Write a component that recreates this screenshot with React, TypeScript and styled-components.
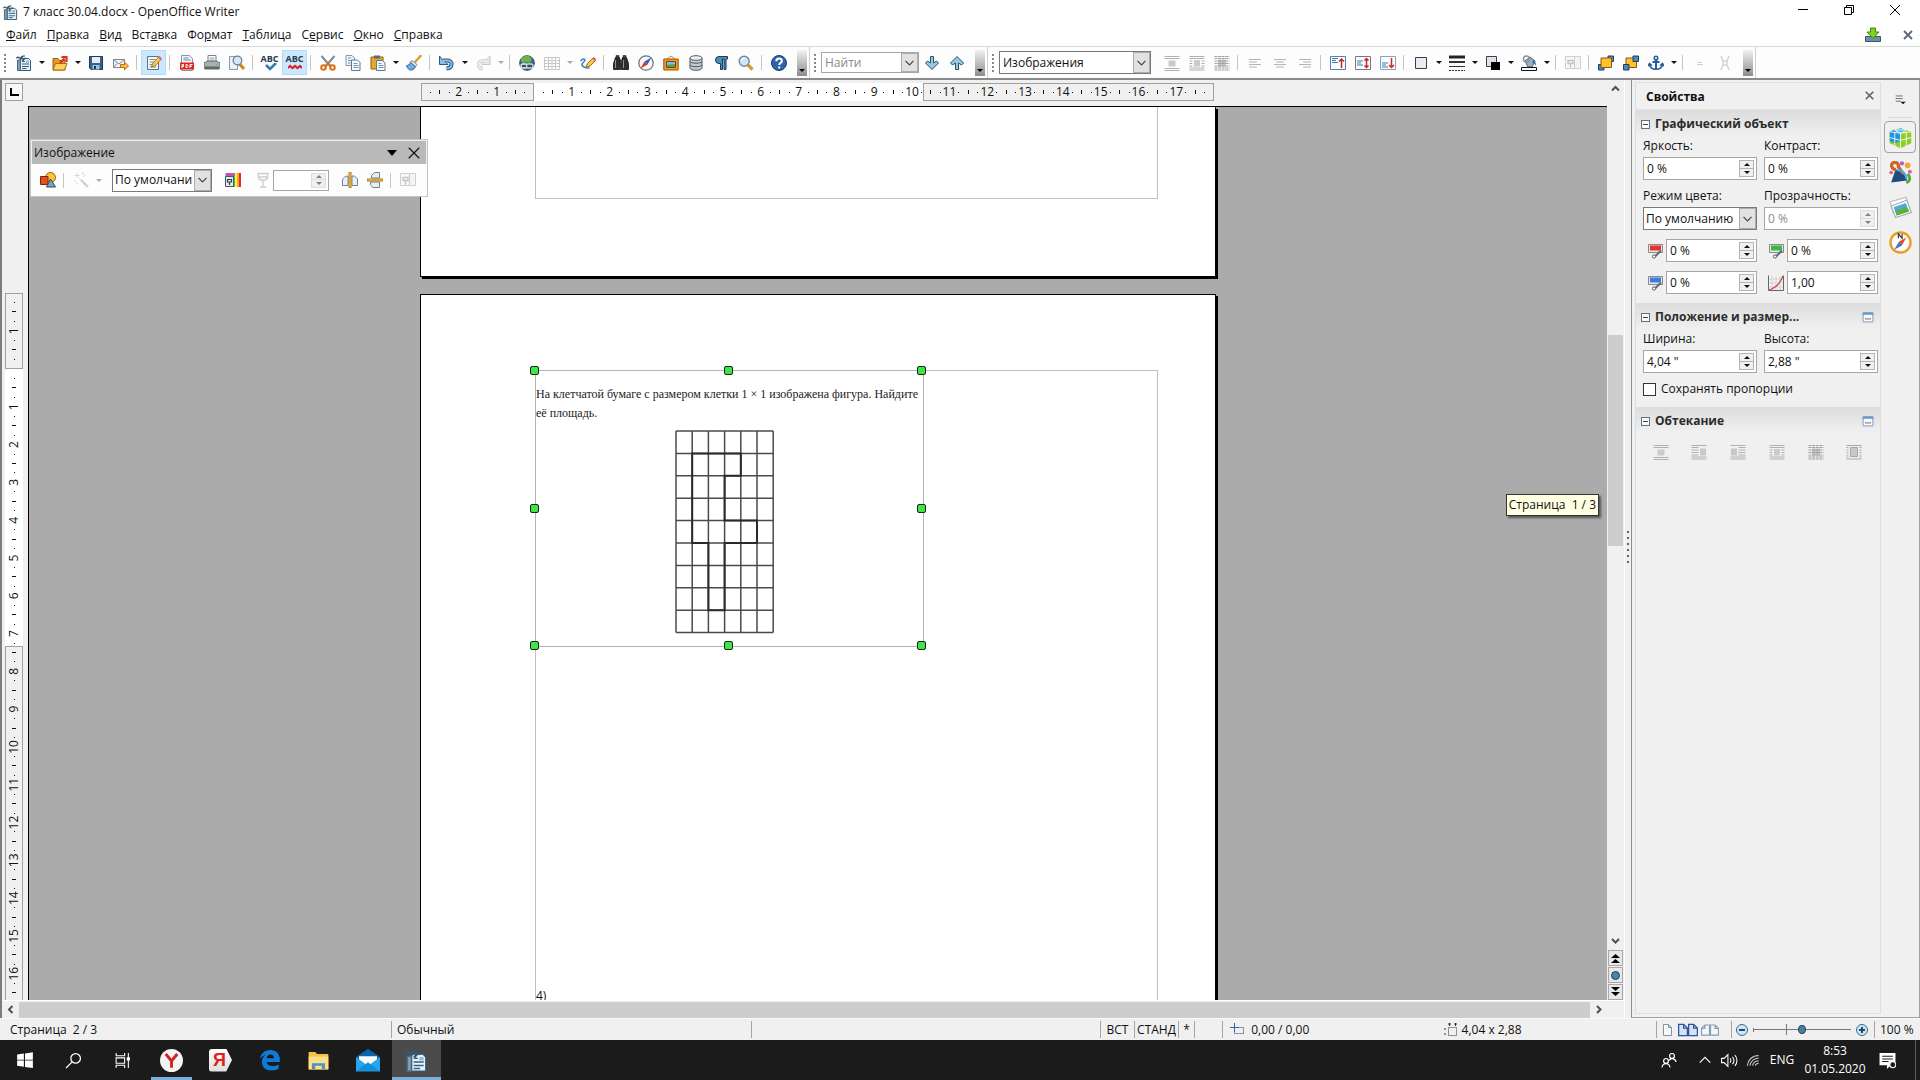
import React from "react";
import styled, { createGlobalStyle, css } from "styled-components";

const uiFont = `"Open Sans", "Noto Sans", sans-serif`;

const GlobalStyle = createGlobalStyle`
  * { box-sizing: border-box; }
  body { margin: 0; font: 12px/16px ${uiFont}; color: #111; background: #f0f0f0; overflow: hidden; }
  button, input, select { font: inherit; color: inherit; border: 0; padding: 0; margin: 0; background: none; border-radius: 0; }
  svg { display: block; flex: none; }
`;

/* ---------- icons ---------- */

const icons: Record<string, React.ReactNode> = {
  writer: (
    <>
      <path d="M4.500 3.500h8l2 2v10h-10z" fill="#e8f1f8" stroke="#36566e" />
      <path d="M6 6.500h3M6 9h7M6 11.500h7M6 13.500h4.500" stroke="#2d6487" />
      <path d="M10 5.500h3v2.500h-3z" fill="#9db9cb" />
      <path d="M0 3.200C1.500 1.200 3 1.500 4 3c1-2 3-2.800 5-2-1.800.2-3 1.500-3.800 3.500C4 3.200 2 2.500 0 3.200zM6 5.500c1.500-2.500 3-3 5-2-2 0-3 1-4 3-.3-.5-.6-.8-1-1z" fill="#36566e" stroke="#36566e" strokeWidth=".5" />
      <path d="M1.500 5v10.500h3V5z" fill="#7f9cb0" stroke="#4b697e" />
    </>
  ),
  open: (
    <>
      <path d="M1 3.500h5l1.500 2H13V15H1z" fill="#e39a1d" stroke="#9b6314" />
      <path d="M3.500 8.500H15L12.500 15H1z" fill="#ffd05c" stroke="#a86c12" />
      <path d="M8 8l4.500-4.500M9.500 2h5v5" fill="none" stroke="#d7331f" strokeWidth="2.200" />
    </>
  ),
  save: (
    <>
      <path d="M1.500 1.500h13v13H3l-1.500-1.500z" fill="#3b6288" stroke="#1f3a55" />
      <path d="M4 2h8v6H4z" fill="#e5eef5" />
      <path d="M4.500 10h7v4.500h-7z" fill="#9cc3dd" />
      <path d="M6 11h2v3H6z" fill="#1f3a55" />
    </>
  ),
  mail: (
    <>
      <path d="M.5 4.500h11v8H.5z" fill="#f3f3f3" stroke="#808890" />
      <path d="M.5 4.500L6 9l5.500-4.500M.5 12.500L4 8.500" fill="none" stroke="#808890" />
      <path d="M7.500 9.500h4V7l4 4-4 4v-2.500h-4z" fill="#ffb84a" stroke="#c06c0e" />
    </>
  ),
  edit: (
    <>
      <path d="M1.500 1.500h11v13h-11z" fill="#f4f7fa" stroke="#5d7184" />
      <path d="M3.500 4.500h6M3.500 7h5M3.500 9.500h3M3.500 12h7" stroke="#7e93a6" />
      <path d="M5.500 12l1-3.500 6-6.500L15 4.500 9 11z" fill="#ffc83f" stroke="#8a6418" strokeWidth=".8" />
      <path d="M12 2.500L13.500 1 16 3.500 14.500 5z" fill="#e35b86" />
    </>
  ),
  pdf: (
    <>
      <path d="M2.500.5h8l3 3v12h-11z" fill="#f0f3f6" stroke="#8796a5" />
      <path d="M4.500 3h5M4.500 5h7" stroke="#6e8aa5" />
      <path d="M1 7.500h14v7H1z" fill="#d7281c" />
      <path d="M3 13V9.500h1.500v2H3M7 9.500v3h1.200l.8-1v-1l-.8-1zM11 13V9.500h2.500M11 11.200h2" fill="none" stroke="#fff" />
    </>
  ),
  print: (
    <>
      <path d="M4 .5h8V7H4z" fill="#fff" stroke="#75828e" />
      <path d="M5.500 3h5M5.500 5h5" stroke="#8fa0b0" />
      <path d="M1.500 7.500L3 6h10l1.500 1.500H16v6H0v-6z" fill="#a9b0ad" stroke="#4f5856" strokeWidth=".8" />
      <path d="M1 11.500h14v3H1z" fill="#5f6965" />
      <path d="M12 9.500h2" stroke="#67c04b" />
    </>
  ),
  preview: (
    <>
      <path d="M.5 1.500h8v13h-8z" fill="#eef2f6" stroke="#8c9baa" />
      <path d="M10.500 9l4.500 5" stroke="#c58a1a" strokeWidth="3" />
      <circle cx="8.500" cy="5.500" r="4.300" fill="#d4e8f8" stroke="#667f96" strokeWidth="1.300" />
    </>
  ),
  cut: (
    <>
      <path d="M1.500 1L11 12M14.500 1L5 12" stroke="#7d8a94" strokeWidth="2" />
      <circle cx="3.500" cy="12.500" r="2.300" fill="none" stroke="#d9701b" strokeWidth="2" />
      <circle cx="12.500" cy="12.500" r="2.300" fill="none" stroke="#d9701b" strokeWidth="2" />
      <path d="M5.500 11L8 8l2.500 3" fill="none" stroke="#d9701b" strokeWidth="1.800" />
    </>
  ),
  copy: (
    <>
      <path d="M1 .5h6l2.500 2.500v7.500H1z" fill="#eef3f8" stroke="#8597a8" />
      <path d="M6.500 5h6L15 7.500v8H6.500z" fill="#f7fafc" stroke="#5f7890" />
      <path d="M3 3h3M3 5.500h3M3 8h2.500M8.500 8.500h4M8.500 10.500h5M8.500 12.500h5" stroke="#6d95b5" />
    </>
  ),
  paste: (
    <>
      <path d="M1 2h12v12H1z" fill="#e8a92b" stroke="#8d6012" />
      <path d="M4 .5h6v3H4z" fill="#5e6872" />
      <path d="M6.500 5.500h6L15 8v7.500H6.500z" fill="#f3f7fa" stroke="#5f7890" />
      <path d="M8.500 8.500h3M8.500 10.500h5M8.500 12.500h5" stroke="#6d95b5" />
    </>
  ),
  brush: (
    <>
      <path d="M9.500 6.500L14.500 1" stroke="#d7a32c" strokeWidth="2.600" strokeLinecap="round" />
      <path d="M6 5.500l5 4-1.500 2-5.500-4.500z" fill="#e6edf2" stroke="#53738c" strokeWidth=".8" />
      <path d="M4.500 7.500l5 4.200C8.500 14.500 6 15.500 3.500 15c-1-1-2.500-2-3-4.500C2.500 10.500 3.500 9 4.500 7.500z" fill="#5ea0d6" stroke="#2e669a" strokeWidth=".8" />
      <path d="M3 11l2 2.500M5 9.500l2.500 3" stroke="#c4e1f5" strokeWidth=".8" />
    </>
  ),
  undo: (
    <>
      <path d="M4 5.500h5a3.500 3.500 0 013.500 4c-.2 2.500-2 3.800-5 4" fill="none" stroke="#295a84" strokeWidth="4" />
      <path d="M.5 1v8.500H9L6 6.500 3 4z" fill="#8dbde0" stroke="#295a84" />
      <path d="M4 5.500h5a3.500 3.500 0 013.500 4c-.2 2.500-2 3.800-5 4" fill="none" stroke="#8dbde0" strokeWidth="2" />
    </>
  ),
  redo: (
    <>
      <path d="M11 6H7a3.500 3.500 0 00-3.500 4c.2 2.500 2 3.500 4.500 3.500" fill="none" stroke="#cfcfcf" strokeWidth="3.400" />
      <path d="M15 1v8.500H7L10 6l2-2z" fill="#e8e8e8" stroke="#c8c8c8" />
      <path d="M11 6H7a3.500 3.500 0 00-3.500 4c.2 2.500 2 3.500 4.500 3.500" fill="none" stroke="#f0f0f0" strokeWidth="1.600" />
    </>
  ),
  globe: (
    <>
      <circle cx="8" cy="8" r="7.300" fill="#356c96" stroke="#2b4c5f" />
      <path d="M2 4c2-3 5-3.500 8-3l3 3-2 4-4-1-3 1-2-2z" fill="#6fb348" />
      <rect x="2" y="9" width="6.500" height="4" rx="2" fill="#35505f" stroke="#e8eef0" strokeWidth="1.300" />
      <rect x="7.500" y="9" width="6.500" height="4" rx="2" fill="#35505f" stroke="#c8d4d8" strokeWidth="1.300" />
    </>
  ),
  table: <path d="M.5 2.500h15v12H.5zM.5 5.500h15M.5 8.500h15M.5 11.500h15M4.500 2.500v12M8 2.500v12M11.500 2.500v12" fill="none" stroke="#c9c9c9" />,
  draw: (
    <>
      <path d="M.5 6c3-3 5-2 4 0s-4 3-2 5 5 2 7 2" fill="none" stroke="#3d79b8" strokeWidth="1.500" />
      <path d="M6 12.500l1.500-4L13 3l2.500 2.500L10 11z" fill="#ffc544" stroke="#8b5a14" strokeWidth=".9" />
      <path d="M12.300 3.500L14 2l2 2-1.500 2z" fill="#e25a5a" />
    </>
  ),
  find: (
    <>
      <path d="M2.500 2.500h4l1 5v7h-7v-6zM9.500 2.500h4l2 6v6h-7v-7z" fill="#2c2f31" stroke="#111" strokeWidth=".8" />
      <path d="M3 .5h3v2.500H3zM10 .5h3v2.500h-3zM6.500 5h3v4h-3z" fill="#3f4448" stroke="#111" strokeWidth=".5" />
      <path d="M2.500 5v8M10.500 5v8" stroke="#8d959b" />
    </>
  ),
  compass: (
    <>
      <circle cx="8" cy="8" r="7.200" fill="#f8f8f8" stroke="#6f777e" strokeWidth="1.300" />
      <path d="M13.500 2.500L9.500 9.500l-3-3z" fill="#2a63c4" />
      <path d="M2.500 13.500l4-7 3 3z" fill="#dd2f23" />
    </>
  ),
  gallery: (
    <>
      <path d="M4 4l4-3 4 3" fill="none" stroke="#b08d46" />
      <path d="M.8 4h14.400v11H.8z" fill="#f09c28" stroke="#9a5208" />
      <path d="M3.500 6.500h9v6h-9z" fill="#7cbcf0" stroke="#7d4509" />
      <path d="M4 12v-1.500c3-2 5 0 8-1.500v3z" fill="#52a043" />
    </>
  ),
  database: (
    <>
      <path d="M2 3v10c0 3 12 3 12 0V3z" fill="#c8cccf" stroke="#50585e" />
      <ellipse cx="8" cy="3" rx="6" ry="2.300" fill="#f3f5f6" stroke="#50585e" />
      <path d="M2 6.500c1 2.300 11 2.300 12 0M2 10c1 2.300 11 2.300 12 0" fill="none" stroke="#50585e" />
    </>
  ),
  pilcrow: <path d="M14.500 1.500H6a3.500 3.500 0 000 7h1.500V14.500h2V4h1.500v10.500h2V4h1.500z" fill="#4d8db8" stroke="#173e5f" />,
  zoom: (
    <>
      <path d="M10 10l4.500 4.500" stroke="#d39a28" strokeWidth="3.200" />
      <circle cx="6.200" cy="6.200" r="5" fill="#cfe5f6" stroke="#71879a" strokeWidth="1.400" />
      <path d="M3.500 6a3 3 0 013-2.800" fill="none" stroke="#fff" strokeWidth="1.200" />
    </>
  ),
  help: (
    <>
      <circle cx="8" cy="8" r="7.500" fill="#2f64ad" stroke="#173b74" />
      <path d="M5.300 6.200c0-3.600 5.600-3.400 5.600-.3 0 2-2.700 2-2.700 4.100M8.200 11.500v2" fill="none" stroke="#fff" strokeWidth="2" />
    </>
  ),
  down: <path d="M6.500 1.500h3V8l3-2 2 2L8 14.500 1.500 8l2-2 3 2z" fill="#9fc6df" stroke="#1f5273" />,
  up: <path d="M6.500 14.500h3V8l3 2 2-2L8 1.500 1.500 8l2 2 3-2z" fill="#9fc6df" stroke="#1f5273" />,
  wrapOff: (
    <>
      <path d="M.5 1.500h15M.5 3.500h15M.5 13.500h15M.5 15.500h15" stroke="#b0b0b0" />
      <path d="M4.500 5.500h7v6h-7z" fill="#cbcbcb" />
    </>
  ),
  wrapLeft: (
    <>
      <path d="M.5 1.500h15M.5 3.500h7M.5 6h7M.5 8.500h7M.5 11h7M.5 13h15M.5 15h15" stroke="#b0b0b0" />
      <path d="M9 4.500h6v7H9z" fill="#c8c8c8" />
    </>
  ),
  wrapRight: (
    <>
      <path d="M.5 1.500h15M8.500 3.500h7M8.500 6h7M8.500 8.500h7M8.500 11h7M.5 13h15M.5 15h15" stroke="#b0b0b0" />
      <path d="M1 4.500h6v7H1z" fill="#c8c8c8" />
    </>
  ),
  wrapOn: (
    <>
      <path d="M.5 1.500h15M.5 13h15M.5 15h15M.5 3.500h15M.5 6h3M.5 8.500h3M.5 11h3M12.500 6h3M12.500 8.500h3M12.500 11h3" stroke="#b0b0b0" />
      <path d="M5 5h6v6.500H5z" fill="#cbcbcb" />
    </>
  ),
  wrapThrough: (
    <>
      <path d="M4 4.500h8v7H4z" fill="#c4c4c4" />
      <path d="M.5 1.500h15M.5 3.500h15M.5 6h15M.5 8.500h15M.5 11h15M.5 13h15M.5 15h15" stroke="#9d9d9d" strokeDasharray="3 .6" />
    </>
  ),
  wrapContour: (
    <>
      <path d="M.5 1.500h15M.5 15h15M.5 3.500h2M.5 6h2M.5 8.500h2M.5 11h2M.5 13h2M13.500 3.500h2M13.500 6h2M13.500 8.500h2M13.500 11h2M13.500 13h2" stroke="#a8a8a8" />
      <path d="M4.500 3.500h7v9h-7z" fill="#c8c8c8" stroke="#a8a8a8" />
    </>
  ),
  alignLeft: <path d="M2 4.500h12M2 7h8M2 9.500h12M2 12h8" stroke="#b4b4b4" />,
  alignCenter: <path d="M2 4.500h12M4 7h8M2 9.500h12M4 12h8" stroke="#b4b4b4" />,
  alignRight: <path d="M2 4.500h12M6 7h8M2 9.500h12M6 12h8" stroke="#b4b4b4" />,
  vTop: (
    <>
      <path d="M.5 1.500h15v13H.5z" fill="#fafcfe" stroke="#5b7fa8" />
      <path d="M2 3.500h6M2 5.500h4M2 7.500h6" stroke="#3f78b5" />
      <path d="M11.500 13V5M9 6.500L11.500 4 14 6.500" fill="none" stroke="#c32a20" strokeWidth="1.500" />
    </>
  ),
  vMiddle: (
    <>
      <path d="M.5 1.500h15v13H.5z" fill="#fafcfe" stroke="#8b6f80" />
      <path d="M2 6h6M2 8h4M2 10h6" stroke="#3f78b5" />
      <path d="M11.500 12V4M9.500 5.500l2-2 2 2M9.500 10.500l2 2 2-2" fill="none" stroke="#c32a20" strokeWidth="1.500" />
    </>
  ),
  vBottom: (
    <>
      <path d="M.5 1.500h15v13H.5z" fill="#fafcfe" stroke="#8fa0b2" />
      <path d="M2 8h6M2 10h4M2 12h6" stroke="#3f78b5" />
      <path d="M11.500 3v8M9 10l2.500 2.500L14 10" fill="none" stroke="#c32a20" strokeWidth="1.500" />
    </>
  ),
  square: <path d="M2.500 2.500h11v11h-11z" fill="#e9edf3" stroke="#3c4046" />,
  lines: (
    <>
      <path d="M0 2h16" stroke="#222" strokeWidth="3" />
      <path d="M0 7h16" stroke="#333" strokeWidth="2" />
      <path d="M0 11.500h16" stroke="#333" />
      <path d="M0 15.500h16" stroke="#333" strokeDasharray="2 1" />
    </>
  ),
  color: (
    <>
      <path d="M1.500 1.500h10v10h-10z" fill="#dfe4ea" stroke="#3c4046" />
      <path d="M6 7h9v8H6z" fill="#000" />
    </>
  ),
  bucket: (
    <>
      <path d="M4 6l5-4 5 4-3 6H7z" fill="#9fb2be" stroke="#4d6372" />
      <circle cx="5.500" cy="4" r="3" fill="none" stroke="#8a949b" strokeWidth="1.400" />
      <path d="M12 5c3 1 3 4 3 6-1-2-2-3-4-3z" fill="#347ab0" />
      <path d="M.5 12.500h15v3H.5z" fill="#fff" stroke="#111" />
    </>
  ),
  properties: (
    <>
      <path d="M4.500 1.500h11v12h-11z" fill="#f3f3f3" stroke="#d0d0d0" />
      <path d="M.5 1.500h9v12h-9z" fill="#f8f8f8" stroke="#cfcfcf" />
      <path d="M3 5.500h5v3H3zM5.500 8.500v4" fill="none" stroke="#c2c2c2" strokeWidth="1.300" />
    </>
  ),
  front: (
    <>
      <path d="M10 1h5.500v5.500H10zM.5 9.500H6V15H.5z" fill="#5886ac" stroke="#1e3f60" />
      <path d="M3 3h10.500v9.500H3z" fill="#ffc12c" stroke="#8d560a" />
    </>
  ),
  back: (
    <>
      <path d="M3 3h10.500v9.500H3z" fill="#ffc12c" stroke="#8d560a" />
      <path d="M10 1h5.500v5.500H10zM.5 9.500H6V15H.5z" fill="#5886ac" stroke="#1e3f60" />
    </>
  ),
  anchor: (
    <>
      <circle cx="8" cy="3" r="1.800" fill="none" stroke="#265e9c" strokeWidth="1.500" />
      <path d="M8 5v9.500M4.500 7h7" stroke="#265e9c" strokeWidth="2" />
      <path d="M1.500 9c.3 3.500 3 5.300 6.500 5.300s6.200-1.800 6.500-5.300M0 11l1.500-2.500L4 10.500M16 11l-1.500-2.500-2.500 2" fill="none" stroke="#265e9c" strokeWidth="1.600" />
    </>
  ),
  equal: <path d="M5 7.500h5M5 9.500h6" stroke="#cfcfcf" />,
  ungroup: <path d="M4 1l2 5h4l2-5M4 15l2-5h4l2 5M6 6v4M10 6v4" fill="none" stroke="#d5d5d5" strokeWidth="1.500" />,
  shapes: (
    <>
      <circle cx="10.500" cy="5.500" r="5" fill="#ffc23c" stroke="#9a6212" />
      <path d="M.5 4.500H8v8H.5z" fill="#e2501c" stroke="#7d2908" />
      <path d="M10.500 7l5 8h-9z" fill="#7d9fc0" stroke="#304b66" />
    </>
  ),
  wand: (
    <>
      <path d="M8 8l7 7" stroke="#d0d0d0" strokeWidth="2.400" />
      <path d="M4 1v5M1.500 3.500h5M10 0v3M1 8l2 2M6 6l2 2M10 5l2-2M3 12l2-1" stroke="#d8d8d8" />
    </>
  ),
  spectrum: (
    <>
      <path d="M6 1h2v14H6z" fill="#32c3ee" />
      <path d="M8 1h2v14H8z" fill="#3fc54c" />
      <path d="M10 1h2v14h-2z" fill="#fff134" />
      <path d="M12 1h2v14h-2z" fill="#ffa32e" />
      <path d="M14 1h2v14h-2z" fill="#e22b2b" />
      <path d="M.5 1h9v3.500h-9z" fill="#c453b4" />
      <path d="M.5 4.500h8v10h-8z" fill="#e3ebf0" stroke="#41586a" />
      <path d="M2.500 7.500h4v2.500h-4zM4.500 10v3" fill="none" stroke="#25404f" strokeWidth="1.200" />
    </>
  ),
  glass: <path d="M3 1.500h10L12.500 6c-1 3-8 3-9 0zM8 9v5M5 15h6M3.500 5h9" fill="none" stroke="#cdcdcd" strokeWidth="1.300" />,
  flipV: (
    <>
      <path d="M.5 13.500V8C1 5.500 4 4 6 4v9.500zM10 4h2.500l3 3v6.500H10z" fill="#e9f0f5" stroke="#6c8294" />
      <path d="M8 0v16" stroke="#a87416" strokeWidth="3" />
      <path d="M8 .5v15" stroke="#ffc44e" strokeWidth="1.200" />
    </>
  ),
  flipH: (
    <>
      <path d="M4.500 6V3.500l3-3h5V6zM3.500 10h9v5.500H7c-2 0-3-1.500-3.500-3z" fill="#e9f0f5" stroke="#6c8294" />
      <path d="M0 8h16" stroke="#a87416" strokeWidth="3" />
      <path d="M.5 8h15" stroke="#ffc44e" strokeWidth="1.200" />
    </>
  ),
  update: (
    <>
      <path d="M.5 9.500h15v5H.5z" fill="#6f8fa8" stroke="#3b566b" />
      <path d="M5.500 1h5v4H14l-6 6.500L2 5h3.500z" fill="#7ed321" stroke="#41860c" />
    </>
  ),
  cross: <path d="M4 4l8 8M12 4l-8 8" stroke="#5b6673" strokeWidth="1.800" />,
  bigCross: <path d="M2 2l12 12M14 2L2 14" stroke="#111" strokeWidth="1.400" />,
  winMin: <path d="M3 7.500h10" stroke="#000" />,
  winRestore: <path d="M3.500 5.500h7v7h-7zM5.500 5.500v-2h7v7h-2" fill="none" stroke="#000" />,
  winClose: <path d="M3 3l10 10M13 3L3 13" stroke="#000" />,
  panelMenu: (
    <>
      <path d="M3 4.500h8M3 7.500h8M3 10.500h6" stroke="#53606d" />
      <path d="M8.500 11h6l-3 3z" fill="#111" />
    </>
  ),
  more: (
    <>
      <path d="M1.500 2.500h13v12h-13z" fill="#f7fafd" stroke="#6282a4" />
      <path d="M1 2h14v3H1z" fill="#6396c8" />
      <path d="M4.500 10.500h7" stroke="#333" strokeWidth="1.500" strokeDasharray="1.500 1.200" />
    </>
  ),
  gamma: (
    <>
      <path d="M.5.5h15v15H.5z" fill="#f2f2f2" />
      <path d="M4 1v14M8 1v14M12 1v14M1 4h14M1 8h14M1 12h14" stroke="#d2d2d2" />
      <path d="M.5.5v15h15V.5" fill="none" stroke="#666" />
      <path d="M1 15C7 13 12 9 15 1" fill="none" stroke="#d0463a" strokeWidth="1.300" />
    </>
  ),
  cubes: (
    <>
      <path d="M.5 4L8 1.500 15.500 4v8L8 15.500.5 12z" fill="#8ccf2b" />
      <path d="M.5 4L4 2.500 8 5v5.500l-4 1.500-3.500-1.500z" fill="#2393dd" />
      <path d="M8 1.500L12 3 8 5 4 3z" fill="#38b8ef" />
      <path d="M8 5l7.500-1M8 5L.5 4M8 5v10.500M.5 8L8 10l7.500-2M4 3l8-.5M4 4.500V14M12 4.500V14M4 3l4 2 4-2" fill="none" stroke="#fff" strokeWidth=".6" />
    </>
  ),
  party: (
    <>
      <path d="M1.500 15l3-9c4 0 8 4 8 7.500z" fill="#1f4c7d" />
      <path d="M5 6C2 6 1 3 2.500 1.500 5 0 7 2 6.500 4L10 9" fill="none" stroke="#cf6320" strokeWidth="2.200" />
      <path d="M5.500 6.500c3-1 7 3 6.500 6" fill="none" stroke="#51a5e8" strokeWidth="1.600" />
      <path d="M12 15c3-1 3-4 1-6" fill="none" stroke="#58a934" strokeWidth="2" />
      <circle cx="9" cy="1.700" r="1.500" fill="#b35fd1" />
      <circle cx="13" cy="3" r="2" fill="#f6a33c" />
      <circle cx="14.500" cy="7.500" r="1.400" fill="#ef5a96" />
      <circle cx="1.500" cy="8" r="1.300" fill="#ef5a96" />
    </>
  ),
  photos: (
    <>
      <path d="M.8 4L12 .8l2 8.500L3 12z" fill="#fdfdfd" stroke="#b5bcc0" strokeWidth=".8" />
      <path d="M1.500 7L12.500 3l3 8.500L4.500 15z" fill="#fff" stroke="#a5adb2" strokeWidth=".8" />
      <path d="M3.200 7.800l8.500-3 2.200 6L5.300 13.500z" fill="#4fa9dd" />
      <path d="M4.500 11c2-3 3 0 4.500-2.500s3 .5 4.500.8l.4 1.500L5.300 13.500z" fill="#63ad36" />
    </>
  ),
  navigator: (
    <>
      <circle cx="8" cy="8" r="7" fill="#fff" stroke="#e8a02a" strokeWidth="1.700" />
      <path d="M6.500 5V2l2.600 3V2" fill="none" stroke="#333" strokeWidth=".8" />
      <path d="M12 4.500L9 10 6.800 7.500z" fill="#e2492e" />
      <path d="M3.500 13L7 7.500 9 10z" fill="#3d76be" />
    </>
  ),
  onePage: <path d="M4.500 2.500h5l3 3v8h-8zM9.500 2.500v3h3" fill="#f6f8fa" stroke="#8191a8" />,
  twoPages: <path d="M.5 3.500h4l3 3v6h-7zM8.500 3.500h4l3 3v6h-7zM4.500 3.500v3h3M12.500 3.500v3h3" fill="#d3e2f8" stroke="#2f559b" />,
  book: <path d="M7.500 3.500h-4l-3 3v6h7zM8.500 3.500h4l3 3v6h-7zM3.500 3.500v3h-3M12.500 3.500v3h3" fill="#f4f7fa" stroke="#8a9cb3" />,
  start: <path d="M1 3.200l6-.9v5.400H1zM8 2.200L15 1v6.700H8zM1 8.500h6v5.400L1 13zM8 8.500h7v6.700l-7-1z" fill="#fff" />,
  search: <path d="M6.500 9.500L1 15M10 1.500a4.500 4.500 0 110 9 4.500 4.500 0 010-9z" fill="none" stroke="#fff" strokeWidth="1.200" />,
  taskView: <path d="M2 1v2.500h8V1M2 15v-2.500h8V15M2 5.500h8v5H2zM13.500 1v14M12.500 5.500h2v2h-2z" fill="none" stroke="#fff" />,
  yandex: (
    <>
      <circle cx="8" cy="8" r="8" fill="#f4f4f4" />
      <path d="M4 3.500L8 8.300l4-4.800M8 8v5" fill="none" stroke="#d42020" strokeWidth="2" />
    </>
  ),
  edge: (
    <path
      d="M.8 7C1.500 3 4.500.8 8.200.8c4.500 0 7 3 7 7.200v1.400H5.500c.2 2 2 3 4.200 3 1.800 0 3.300-.5 4.600-1.200v3.200c-1.500.8-3.300 1.200-5.200 1.200-4.200 0-7-2.500-7-6.200 0-2.300 1.200-4.200 3-5.400C3.400 4.700 1.800 5.500.8 7zM5.600 6.800h5.300c0-1.800-1-2.800-2.600-2.800-1.500 0-2.500 1.100-2.700 2.800z"
      fill="#0f7bd7"
    />
  ),
  folder: (
    <>
      <path d="M.5 1.500h5L7 3h8.500v12H.5z" fill="#f5c24a" />
      <path d="M.5 5h15v9.500H.5z" fill="#ffdf86" />
      <path d="M3 14.500V10h10v4.500h-2.500V12h-5v2.500z" fill="#3f97d8" />
    </>
  ),
  mailApp: (
    <>
      <path d="M0 6l8-5.500L16 6v9.500H0z" fill="#0a63ad" />
      <path d="M2 5.500h12V12H2z" fill="#f6fafd" />
      <path d="M0 6l8 6 8-6v9.500H0z" fill="#27a5ec" />
      <path d="M0 15.500l8-6 8 6z" fill="#1390dc" />
    </>
  ),
  people: (
    <path d="M11 1.500a2.300 2.300 0 110 4.800 2.300 2.300 0 010-4.800zM8.200 8.500c1-2.800 6-2.800 6.800 1.500M5 6.500a2.300 2.300 0 110 4.800 2.300 2.300 0 010-4.800zM1 15.500c.5-5 7.500-5 8 0" fill="none" stroke="#fff" strokeWidth="1.200" />
  ),
  chevronUp: <path d="M2 11l6-6 6 6" fill="none" stroke="#fff" strokeWidth="1.300" />,
  speaker: <path d="M.5 6H3l3.500-3.500v11L3 10H.5zM8.500 6c1 1 1 3 0 4M10.700 4.500c2 2 2 5 0 7M13 3c2.700 2.700 2.700 7.300 0 10" fill="none" stroke="#fff" />,
  wifi: <path d="M1.500 14.500C2 8 7 3 14.500 2.800M4.500 14.500c.5-4.500 4.500-8.500 10-8.700M7.500 14.500c.5-3 3-5.500 7-5.700M10.500 14.500c.3-1.500 1.500-2.700 4-2.900" fill="none" stroke="#c9c9c9" strokeWidth="1.200" />,
  notes: (
    <>
      <path d="M.5 1h15v11.500H11L7.500 16v-3.500h-7z" fill="#fff" />
      <path d="M3 4h10M3 6.500h10M3 9h6" stroke="#1b1b1b" />
      <circle cx="13" cy="12" r="2.800" fill="#1b1b1b" stroke="#fff" />
    </>
  ),
  posIcon: (
    <>
      <path d="M5.500 5.500h9v6h-9z" fill="none" stroke="#333" strokeDasharray="1 1" />
      <path d="M5.500 1v9M1 5.500h9" stroke="#3a5fb5" />
    </>
  ),
  sizeIcon: (
    <>
      <path d="M5.500 5.500h8v8h-8z" fill="none" stroke="#333" strokeDasharray="1 1" />
      <path d="M5 2h3M11 2h3M2 6v2M2 11v2M6.500 1v3M12.500 1v3" stroke="#333" />
    </>
  ),
};

const channel = (color: string) => (
  <>
    <path d="M1.500 1.500h14v8h-14z" fill="#e8e8e8" stroke="#888" />
    <path d="M3 2.500h11v5H3z" fill={color} />
    <path d="M8 13.500L14 7.500" stroke="#5a6a78" strokeWidth="2" />
    <circle cx="7" cy="13.500" r="1.600" fill="#fff" stroke="#53616c" />
  </>
);
icons.red = channel("#e5322f");
icons.green = channel("#39b848");
icons.blue = channel("#3f7be0");

const Icon = ({ name, size = 16 }: { name: string; size?: number }) => (
  <svg width={size} height={size} viewBox="0 0 16 16" aria-hidden="true">
    {icons[name]}
  </svg>
);

/* ---------- window chrome ---------- */

const Window = styled.div`
  display: flex;
  flex-direction: column;
  height: 100vh;
`;
const TitleBar = styled.header`
  display: flex;
  align-items: center;
  gap: 5px;
  height: 24px;
  padding-left: 3px;
  background: #fff;
`;
const Title = styled.h1`
  flex: 1;
  margin: 0;
  font-size: 12px;
  font-weight: 400;
`;
const CaptionButton = styled.button`
  display: grid;
  place-items: center;
  width: 46px;
  height: 20px;
  align-self: flex-start;
`;
const Captions = styled.div`
  display: flex;
  align-self: stretch;
  padding-right: 2px;
`;
const MenuBar = styled.nav`
  display: flex;
  align-items: center;
  gap: 10px;
  height: 22px;
  padding: 0 4px 0 6px;
  background: #fff;
`;
const MenuItem = styled.button`
  white-space: nowrap;
`;
const MenuIcons = styled.div`
  display: flex;
  flex: 1;
  justify-content: flex-end;
  gap: 19px;
`;
const SmallButton = styled.button`
  display: grid;
  place-items: center;
  width: 16px;
  height: 16px;
`;

const ToolRow = styled.div`
  display: flex;
  height: 34px;
  background: #fdfdfd;
  border-top: 1px solid #d9d9d9;
  border-bottom: 2px solid #8a8a8a;
`;
const Toolbar = styled.div`
  display: flex;
  align-items: center;
  border-right: 1px solid #d0d0d0;
  padding-right: 2px;
`;
const Grip = styled.span`
  width: 11px;
  height: 18px;
  background: radial-gradient(circle at 5px 1px, #888 1px, transparent 1px) 0 0 / 11px 4px;
`;
const ToolButton = styled.button<{ $on?: boolean; $narrow?: boolean }>`
  display: grid;
  place-items: center;
  width: ${(p) => (p.$narrow ? 20 : 25)}px;
  height: 25px;
  ${(p) => p.$on && css`background: #cce8ff; outline: 1px solid #b5dbf7; outline-offset: -1px;`}
`;
const DropButton = styled.button<{ $dim?: boolean }>`
  display: grid;
  place-items: center;
  width: 11px;
  height: 25px;
  &::before {
    content: "";
    border: 3px solid transparent;
    border-top-color: ${(p) => (p.$dim ? "#aaa" : "#111")};
    border-bottom: 0;
  }
`;
const Divider = styled.span`
  width: 8px;
  height: 15px;
  background: linear-gradient(#c4c4c4, #c4c4c4) 3px 0 / 1px 100% no-repeat;
`;
const Overflow = styled.button`
  display: flex;
  align-items: flex-end;
  justify-content: center;
  width: 10px;
  height: 26px;
  margin-left: 6px;
  padding-bottom: 4px;
  background: linear-gradient(#f2f2f2, #8c8c8c);
  &::before {
    content: "";
    border: 3px solid transparent;
    border-top-color: #000;
    border-bottom: 0;
  }
`;
const SpellLabel = styled.span`
  display: flex;
  flex-direction: column;
  align-items: center;
  font: 700 9px/8px ${uiFont};
  color: #26394c;
`;

const Spell = ({ wave }: { wave?: boolean }) => (
  <SpellLabel>
    ABC
    <svg width="14" height="8" viewBox="0 0 14 8">
      {wave ? (
        <path d="M0 5l2-2 2.500 2L7 3l2.500 2L12 3l2 2" fill="none" stroke="#d3262a" strokeWidth="2.200" />
      ) : (
        <path d="M3 2l4 4 6-6" fill="none" stroke="#2c7db8" strokeWidth="2.600" />
      )}
    </svg>
  </SpellLabel>
);

/* A toolbar entry: an icon name, "|" for a divider, "v" / "v-" for a drop arrow. */
const Tools = ({ items }: { items: string[] }) => (
  <>
    {items.map((item, i) => {
      if (item === "|") return <Divider key={i} />;
      if (item === "v" || item === "v-") return <DropButton key={i} $dim={item === "v-"} aria-label="▾" />;
      if (item === "abc" || item === "abcWave")
        return (
          <ToolButton key={i} $on={item === "abcWave"}>
            <Spell wave={item === "abcWave"} />
          </ToolButton>
        );
      return (
        <ToolButton key={i} $on={item === "edit"} aria-label={item}>
          <Icon name={item} />
        </ToolButton>
      );
    })}
  </>
);

/* ---------- fields ---------- */

const Field = styled.span<{ $w?: number; $h?: number; $dark?: boolean }>`
  display: grid;
  grid-template-columns: minmax(0, 1fr) auto;
  width: ${(p) => (p.$w ? `${p.$w}px` : "auto")};
  height: ${(p) => p.$h ?? 23}px;
  background: #fff;
  border: 1px solid ${(p) => (p.$dark ? "#7a7a7a" : "#a6a6a6")};
`;
const Select = styled.select<{ $pad: number }>`
  grid-area: 1 / 1 / 2 / 3;
  appearance: none;
  min-width: 0;
  padding: 0 18px 0 ${(p) => p.$pad}px;
  outline: 0;
`;
const ArrowBox = styled.span`
  grid-area: 1 / 2;
  display: grid;
  place-items: center;
  width: 17px;
  background: #e1e1e1;
  border: 1px solid #adadad;
  pointer-events: none;
`;
const Chevron = () => (
  <ArrowBox>
    <svg width="9" height="6" viewBox="0 0 9 6">
      <path d="M.5.8l4 4 4-4" fill="none" stroke="#444" strokeWidth="1.200" />
    </svg>
  </ArrowBox>
);
const TextInput = styled.input`
  min-width: 0;
  width: 100%;
  padding-left: 3px;
  outline: 0;
  &:disabled { color: #8d8d8d; }
  &::placeholder { color: #8a8a8a; }
`;
const Steps = styled.span`
  display: grid;
  grid-template-rows: 1fr 1fr;
  width: 15px;
  margin: 2px;
`;
const Step = styled.button<{ $down?: boolean }>`
  display: grid;
  place-items: center;
  background: #f0f0f0;
  border: 1px solid #b4b4b4;
  &:disabled { border-color: #dcdcdc; }
  & + & { border-top: 0; }
  &::before {
    content: "";
    border: 3px solid transparent;
    ${(p) => (p.$down ? "border-top-color: #111; border-bottom: 0;" : "border-bottom-color: #111; border-top: 0;")}
  }
  &:disabled::before { opacity: 0.5; }
`;
const Spin = ({ id, value, label, disabled, width, height }: { id: string; value: string; label?: string; disabled?: boolean; width?: number; height?: number }) => (
  <Field $w={width} $h={height}>
    <TextInput id={id} defaultValue={value} aria-label={label} disabled={disabled} />
    <Steps>
      <Step disabled={disabled} aria-label="+" />
      <Step $down disabled={disabled} aria-label="−" />
    </Steps>
  </Field>
);

/* ---------- rulers ---------- */

const CM = 37.8;
const Ruler = ({ from, to, vertical }: { from: number; to: number; vertical?: boolean }) => {
  const marks: React.ReactNode[] = [];
  const first = Math.ceil(from * 4);
  for (let q = first; q < to * 4; q++) {
    const pos = (q / 4 - from) * CM;
    const n = Math.abs(q / 4);
    const x = vertical ? 9 : pos;
    const y = vertical ? pos : 9;
    if (q === 0 || pos < 2) continue;
    if (Number.isInteger(n)) {
      marks.push(
        <text key={q} x={x} y={y} dy="4" textAnchor="middle" transform={vertical ? `rotate(-90 ${x} ${y})` : undefined}>
          {n}
        </text>
      );
    } else {
      const half = q % 2 === 0;
      const w = half && vertical ? 4 : 1;
      const h = half && !vertical ? 4 : 1;
      marks.push(<rect key={q} x={Math.round(x - w / 2)} y={Math.round(y - h / 2)} width={w} height={h} />);
    }
  }
  const length = Math.round((to - from) * CM);
  return (
    <svg width={vertical ? 18 : length} height={vertical ? length : 18} fontSize="12" fill="#111" shapeRendering="crispEdges">
      {marks}
    </svg>
  );
};

const Main = styled.main`
  position: relative;
  display: flex;
  flex: 1;
  min-height: 0;
  background: #f0f0f0;
`;
const Editor = styled.section`
  display: grid;
  flex: 1;
  grid-template: 26px minmax(0, 1fr) 18px / 26px minmax(0, 1fr) 17px;
  min-width: 0;
  border-left: 2px solid #7c7c7c;
`;
const Corner = styled.button`
  width: 18px;
  height: 18px;
  margin: 3px;
  border: 1px solid #a0a0a0;
  background: #f8f8f8;
  display: grid;
  place-items: center;
  &::before {
    content: "";
    width: 7px;
    height: 6px;
    border: solid #000;
    border-width: 0 0 2px 2px;
  }
`;
const TopRuler = styled.div`
  display: flex;
  justify-content: center;
  padding-top: 3px;
  overflow: hidden;
`;
const SideRuler = styled.div`
  display: flex;
  flex-direction: column;
  padding: 187px 0 0 3px;
  overflow: hidden;
`;
const Scale = styled.div<{ $active?: boolean; $vertical?: boolean }>`
  ${(p) => (p.$vertical ? "width: 18px;" : "height: 18px;")}
  flex: none;
  background: ${(p) => (p.$active ? "#fff" : "#f0f0f0")};
  box-shadow: ${(p) => (p.$active ? "none" : "inset 0 0 0 1px #a0a0a0")};
`;
const Canvas = styled.div`
  display: flex;
  flex-direction: column;
  align-items: center;
  overflow: hidden;
  background: #ababab;
  border: solid #000;
  border-width: 1px 0 0 1px;
`;
const Page = styled.article<{ $first?: boolean }>`
  flex: none;
  width: 796px;
  background: #fff;
  border: 1px solid #000;
  box-shadow: 2px 2px 0 #000;
  ${(p) =>
    p.$first
      ? css`height: 170px; border-top: 0; padding: 0 57px 77px 114px; margin-bottom: 17px;`
      : css`height: 1123px; padding: 75px 57px 75px 114px;`}
`;
const TextFrame = styled.div<{ $first?: boolean }>`
  height: 100%;
  border: 1px solid #c0c0c0;
  ${(p) => p.$first && "border-top: 0;"}
`;
const Figure = styled.figure`
  position: relative;
  width: 389px;
  height: 277px;
  margin: -1px 0 341px -1px;
  padding-top: 14px;
  border: 1px solid #b4b4b4;
`;
const Caption = styled.figcaption`
  font: 12px/19px "Liberation Serif", serif;
  color: #222;
  white-space: nowrap;
`;
const Drawing = styled.div`
  padding: 7px 0 0 139px;
`;
const Handle = styled.span<{ $x: number; $y: number }>`
  position: absolute;
  left: calc(${(p) => p.$x}% - 6px);
  top: calc(${(p) => p.$y}% - 5px);
  width: 9px;
  height: 9px;
  background: #45e04f;
  border: 1px solid #08300b;
  border-radius: 2px;
`;
const ListMark = styled.p`
  margin: 0;
  font-size: 12px;
  line-height: 16px;
`;

const cellX = 16.2;
const cellY = 22.4;
const outline = [[1, 1], [4, 1], [4, 2], [3, 2], [3, 4], [5, 4], [5, 5], [3, 5], [3, 8], [2, 8], [2, 5], [1, 5]];
const GridFigure = () => (
  <svg width="100" height="204" viewBox="-1 -1 100 204">
    <g stroke="#4a4a4a" strokeWidth="1.500">
      {Array.from({ length: 7 }, (_, i) => (
        <line key={`c${i}`} x1={i * cellX} x2={i * cellX} y1="0" y2={9 * cellY} />
      ))}
      {Array.from({ length: 10 }, (_, i) => (
        <line key={`r${i}`} y1={i * cellY} y2={i * cellY} x1="0" x2={6 * cellX} />
      ))}
    </g>
    <polygon points={outline.map(([x, y]) => `${x * cellX},${y * cellY}`).join(" ")} fill="none" stroke="#2a2a2a" strokeWidth="2" />
  </svg>
);

/* ---------- scroll bars ---------- */

const VScroll = styled.div`
  grid-area: 1 / 3 / 3 / 4;
  display: flex;
  flex-direction: column;
  align-items: center;
  gap: 1px;
`;
const HScroll = styled.div`
  grid-area: 3 / 1 / 4 / 4;
  display: flex;
  align-items: center;
  padding-right: 17px;
  border-top: 1px solid #fff;
`;
const ArrowButton = styled.button`
  display: grid;
  place-items: center;
  width: 17px;
  height: 17px;
`;
const VTrack = styled.div`
  display: grid;
  flex: 1;
  grid-template-rows: 237fr 212fr 385fr;
  width: 15px;
`;
const VThumb = styled.div`
  grid-row: 2;
  background: #cdcdcd;
`;
const HThumb = styled.div`
  flex: 1;
  height: 16px;
  background: #cdcdcd;
`;
const NavButton = styled.button`
  display: grid;
  place-items: center;
  width: 15px;
  height: 16px;
  background: #e8e8e8;
  border: 1px solid #a8a8a8;
`;
const Arrow = ({ d }: { d: string }) => (
  <svg width="9" height="9" viewBox="0 0 9 9">
    <path d={d} fill="none" stroke="#505050" strokeWidth="2" />
  </svg>
);

const PageTip = styled.div`
  position: absolute;
  right: 321px;
  top: 414px;
  padding: 2px;
  background: #ffffe1;
  border: 1px solid #333;
  box-shadow: 2px 2px 2px rgba(0, 0, 0, 0.5);
  line-height: 16px;
  font-size: 12px;
  white-space: pre;
`;

/* ---------- floating image toolbar ---------- */

const Floating = styled.section`
  position: absolute;
  left: 30px;
  top: 59px;
  width: 398px;
  background: #fdfdfd;
  border: 1px solid #e8e8e8;
  outline: 1px solid #c4c4c4;
  outline-offset: -1px;
`;
const FloatingTitle = styled.header`
  display: flex;
  align-items: center;
  gap: 4px;
  height: 24px;
  padding: 0 4px 0 2px;
  background: #b9b9b9;
  border: 1px solid #eee;
  border-bottom: 0;
`;
const FloatingName = styled.h2`
  flex: 1;
  margin: 0;
  font-size: 12px;
  font-weight: 400;
`;
const FloatingMenu = styled.button`
  width: 20px;
  height: 16px;
  display: grid;
  place-items: center;
  &::before {
    content: "";
    border: 5px solid transparent;
    border-top: 6px solid #000;
    border-bottom: 0;
  }
`;
const FloatingRow = styled.div`
  display: flex;
  align-items: center;
  height: 32px;
  padding: 0 4px;
`;
const Gap = styled.span`
  width: 8px;
`;

/* ---------- sidebar ---------- */

const Splitter = styled.div`
  width: 8px;
  border-left: 1px solid #fafafa;
  border-right: 1px solid #8e8e8e;
  display: flex;
  align-items: center;
  justify-content: center;
  &::before {
    content: "";
    width: 2px;
    height: 36px;
    background: repeating-linear-gradient(#666 0 2px, transparent 2px 6px);
  }
`;
const Sidebar = styled.aside`
  display: flex;
  width: 288px;
  border-right: 1px solid #a0a0a0;
  border-bottom: 1px solid #a0a0a0;
`;
const Deck = styled.div`
  flex: 1;
  margin: 2px 0 3px 3px;
  border: 1px solid #dedede;
`;
const DeckTitle = styled.header`
  display: flex;
  align-items: flex-start;
  justify-content: space-between;
  height: 27px;
  padding: 4px 3px 0 10px;
  border-bottom: 1px solid #e2e2e2;
`;
const DeckName = styled.h2`
  margin: 2px 0 0;
  font-size: 12px;
  line-height: 16px;
  font-weight: 700;
`;
const SectionHead = styled.h3`
  display: flex;
  align-items: center;
  gap: 5px;
  height: 26px;
  margin: 0;
  padding: 2px 4px 0 5px;
  font-size: 12px;
  font-weight: 700;
  color: #2c2c2c;
  background: linear-gradient(#dcdcdc, #f0f0f0);
`;
const SectionName = styled.span`
  flex: 1;
`;
const Collapse = styled.button`
  width: 9px;
  height: 9px;
  border: 1px solid #5f7288;
  background: linear-gradient(#444, #444) center / 5px 1px no-repeat #fafafa;
`;
const Fields = styled.div`
  display: grid;
  grid-template-columns: 1fr 1fr;
  column-gap: 7px;
  padding: 0 2px 9px 7px;
`;
const Label = styled.label`
  height: 21px;
  padding-top: 2px;
  line-height: 16px;
  white-space: nowrap;
`;
const Spaced = styled.div`
  display: grid;
  margin-bottom: 6px;
`;
const IconField = styled.div`
  display: grid;
  grid-template-columns: 23px minmax(0, 1fr);
  align-items: center;
  margin-top: 9px;
  & > svg { justify-self: center; }
`;
const CheckRow = styled.label`
  display: flex;
  grid-column: 1 / 3;
  align-items: center;
  gap: 5px;
  height: 18px;
  margin: 7px 0 0;
`;
const Checkbox = styled.input`
  appearance: none;
  width: 13px;
  height: 13px;
  background: #fff;
  border: 1px solid #333;
`;
const WrapRow = styled.div`
  display: flex;
  justify-content: space-between;
  padding: 6px 13px 0 12px;
`;
const Tabs = styled.nav`
  display: flex;
  flex-direction: column;
  align-items: center;
  gap: 3px;
  width: 38px;
  padding-top: 9px;
`;
const TabMenu = styled.button`
  height: 29px;
  width: 24px;
  display: grid;
  justify-items: center;
  align-content: start;
  padding-top: 3px;
  border-bottom: 1px solid #dcdcdc;
`;
const Tab = styled.button<{ $on?: boolean }>`
  display: grid;
  place-items: center;
  width: 32px;
  height: 32px;
  border: 1px solid ${(p) => (p.$on ? "#a2a2a2" : "transparent")};
  border-radius: 4px;
`;

/* ---------- status bar ---------- */

const StatusBar = styled.footer`
  display: flex;
  align-items: center;
  height: 22px;
  background: #f0f0f0;
  border-top: 1px solid #fafafa;
`;
const Cell = styled.div<{ $w?: number; $pad?: number; $center?: boolean }>`
  display: flex;
  align-items: center;
  justify-content: ${(p) => (p.$center ? "center" : "flex-start")};
  height: 17px;
  ${(p) => (p.$w ? `width: ${p.$w}px;` : "flex: 1;")}
  padding-left: ${(p) => p.$pad ?? 0}px;
  white-space: pre;
  & + & { border-left: 1px solid #a5a5a5; }
`;
const Half = styled.span`
  display: flex;
  flex: 1;
  align-items: center;
`;
const PageModes = styled.div`
  display: flex;
  align-items: center;
  gap: 3px;
`;
const ZoomButton = styled.button<{ $plus?: boolean }>`
  width: 12px;
  height: 12px;
  border: 1px solid #3d6a8c;
  border-radius: 50%;
  background:
    linear-gradient(#1d4a6b, #1d4a6b) center / 6px 2px no-repeat,
    ${(p) => (p.$plus ? "linear-gradient(#1d4a6b, #1d4a6b) center / 2px 6px no-repeat," : "")}
    #cfe6f7;
`;
const ZoomSlider = styled.input`
  appearance: none;
  width: 98px;
  height: 14px;
  margin: 0 5px;
  background:
    linear-gradient(#777, #777) 33px center / 1px 11px no-repeat,
    linear-gradient(#777, #777) left center / 1px 4px no-repeat,
    linear-gradient(#777, #777) center / 100% 1px no-repeat;
  &::-webkit-slider-thumb {
    appearance: none;
    width: 8px;
    height: 9px;
    border: 1px solid #1e4258;
    border-radius: 50%;
    background: #4d7f9d;
  }
`;

/* ---------- taskbar ---------- */

const TaskBar = styled.nav`
  display: flex;
  height: 40px;
  background: #1b1b1c;
  color: #fff;
`;
const TaskButton = styled.button<{ $state?: "running" | "active" }>`
  display: grid;
  place-items: center;
  width: 49px;
  height: 40px;
  ${(p) => p.$state === "active" && "background: #4b4b4c; box-shadow: inset 0 -3px #76b2dd;"}
  ${(p) => p.$state === "running" && "background: linear-gradient(#76b2dd, #76b2dd) center bottom / 41px 3px no-repeat;"}
`;
const YaTile = styled.span`
  width: 23px;
  height: 23px;
  padding-left: 4px;
  background: linear-gradient(#fff, #ddd);
  clip-path: polygon(0 0, 75% 0, 100% 50%, 75% 100%, 0 100%);
  border-radius: 3px;
  color: #e01f1f;
  font: 700 18px/23px "Liberation Sans", sans-serif;
  text-align: left;
`;
const Tray = styled.div`
  display: flex;
  align-items: center;
  margin-left: auto;
  padding-right: 4px;
`;
const TrayButton = styled.button<{ $w: number }>`
  display: grid;
  place-items: center;
  width: ${(p) => p.$w}px;
  height: 40px;
`;
const Clock = styled.time`
  width: 72px;
  text-align: center;
  line-height: 18px;
  font-size: 12px;
`;
const ShowDesktop = styled.button`
  width: 1px;
  height: 40px;
  margin-left: 12px;
  background: #5c5c5c;
`;

const menu: [string, number][] = [
  ["Файл", 0], ["Правка", 0], ["Вид", 0], ["Вставка", 3], ["Формат", 2], ["Таблица", 0], ["Сервис", 1], ["Окно", 0], ["Справка", 0],
];
const handles = [[0, 0], [50, 0], [100, 0], [0, 50], [100, 50], [0, 100], [50, 100], [100, 100]];

export default function App() {
  return (
    <Window>
      <GlobalStyle />
      <TitleBar>
        <Icon name="writer" size={15} />
        <Title>7 класс 30.04.docx - OpenOffice Writer</Title>
        <Captions>
          <CaptionButton aria-label="Свернуть"><Icon name="winMin" /></CaptionButton>
          <CaptionButton aria-label="Восстановить"><Icon name="winRestore" /></CaptionButton>
          <CaptionButton aria-label="Закрыть"><Icon name="winClose" /></CaptionButton>
        </Captions>
      </TitleBar>
      <MenuBar>
        {menu.map(([text, u]) => (
          <MenuItem key={text}>
            {text.slice(0, u)}
            <u>{text[u]}</u>
            {text.slice(u + 1)}
          </MenuItem>
        ))}
        <MenuIcons>
          <SmallButton aria-label="Обновление"><Icon name="update" /></SmallButton>
          <SmallButton aria-label="Закрыть документ"><Icon name="cross" /></SmallButton>
        </MenuIcons>
      </MenuBar>
      <ToolRow>
        <Toolbar>
          <Grip />
          <Tools
            items={["writer", "v", "open", "v", "save", "mail", "|", "edit", "|", "pdf", "print", "preview", "|", "abc", "abcWave", "|", "cut", "copy", "paste", "v", "brush", "|", "undo", "v", "redo", "v-", "|", "globe", "table", "v-", "draw", "|", "find", "compass", "gallery", "database", "pilcrow", "zoom", "|", "help"]}
          />
          <Overflow aria-label="▾" />
        </Toolbar>
        <Toolbar>
          <Grip />
          <Field $w={98} $h={21}>
            <TextInput placeholder="Найти" aria-label="Найти" />
            <Chevron />
          </Field>
          <Tools items={["down", "up"]} />
          <Overflow aria-label="▾" />
        </Toolbar>
        <Toolbar>
          <Grip />
          <Field $w={152} $h={23} $dark>
            <Select $pad={3} aria-label="Стиль">
              <option>Изображения</option>
            </Select>
            <Chevron />
          </Field>
          <Gap />
          <Tools
            items={["wrapOff", "wrapOn", "wrapThrough", "|", "alignLeft", "alignCenter", "alignRight", "|", "vTop", "vMiddle", "vBottom", "|", "square", "v", "lines", "v", "color", "v", "bucket", "v", "|", "properties", "|", "front", "back", "anchor", "v", "|", "equal", "ungroup"]}
          />
          <Overflow aria-label="▾" />
        </Toolbar>
      </ToolRow>

      <Main>
        <Editor>
          <Corner aria-label="Табуляция" />
          <TopRuler>
            <Scale><Ruler from={-3} to={0} /></Scale>
            <Scale $active><Ruler from={0} to={10.3} /></Scale>
            <Scale><Ruler from={10.3} to={18} /></Scale>
          </TopRuler>
          <SideRuler>
            <Scale $vertical><Ruler from={-2} to={0} vertical /></Scale>
            <Scale $vertical $active><Ruler from={0} to={7.33} vertical /></Scale>
            <Scale $vertical><Ruler from={7.33} to={17} vertical /></Scale>
          </SideRuler>
          <Canvas>
            <Page $first>
              <TextFrame $first />
            </Page>
            <Page>
              <TextFrame>
                <Figure>
                  <Caption>
                    На клетчатой бумаге с размером клетки 1 × 1 изображена фигура. Найдите
                    <br />
                    её площадь.
                  </Caption>
                  <Drawing><GridFigure /></Drawing>
                  {handles.map(([x, y]) => (
                    <Handle key={`${x}-${y}`} $x={x} $y={y} />
                  ))}
                </Figure>
                <ListMark>4)</ListMark>
              </TextFrame>
            </Page>
          </Canvas>
          <VScroll>
            <ArrowButton aria-label="Вверх"><Arrow d="M1 6.500L4.500 3 8 6.500" /></ArrowButton>
            <VTrack><VThumb /></VTrack>
            <ArrowButton aria-label="Вниз"><Arrow d="M1 3l3.500 3.500L8 3" /></ArrowButton>
            <NavButton aria-label="Предыдущая страница">
              <svg width="9" height="10"><path d="M0 5l4.500-4L9 5zM0 10l4.500-4L9 10z" /></svg>
            </NavButton>
            <NavButton aria-label="Навигация">
              <svg width="9" height="9"><circle cx="4.500" cy="4.500" r="4" fill="#4c84a6" stroke="#1e455e" /></svg>
            </NavButton>
            <NavButton aria-label="Следующая страница">
              <svg width="9" height="10"><path d="M0 0h9L4.500 4zM0 5h9L4.500 9z" /></svg>
            </NavButton>
          </VScroll>
          <HScroll>
            <ArrowButton aria-label="Влево"><Arrow d="M6.500 1L3 4.500 6.500 8" /></ArrowButton>
            <HThumb />
            <ArrowButton aria-label="Вправо"><Arrow d="M3 1l3.500 3.500L3 8" /></ArrowButton>
          </HScroll>
        </Editor>
        <Splitter />
        <Sidebar>
          <Deck>
            <DeckTitle>
              <DeckName>Свойства</DeckName>
              <SmallButton aria-label="Закрыть панель"><Icon name="cross" size={15} /></SmallButton>
            </DeckTitle>
            <SectionHead>
              <Collapse aria-label="Свернуть" />
              <SectionName>Графический объект</SectionName>
            </SectionHead>
            <Fields>
              <Label htmlFor="brightness">Яркость:</Label>
              <Label htmlFor="contrast">Контраст:</Label>
              <Spaced><Spin id="brightness" value="0 %" /></Spaced>
              <Spaced><Spin id="contrast" value="0 %" /></Spaced>
              <Label htmlFor="mode">Режим цвета:</Label>
              <Label htmlFor="transparency">Прозрачность:</Label>
              <Field $dark>
                <Select id="mode" $pad={2}>
                  <option>По умолчанию</option>
                </Select>
                <Chevron />
              </Field>
              <Spin id="transparency" value="0 %" disabled />
              <IconField><Icon name="red" /><Spin id="red" label="Красный" value="0 %" /></IconField>
              <IconField><Icon name="green" /><Spin id="green" label="Зелёный" value="0 %" /></IconField>
              <IconField><Icon name="blue" /><Spin id="blue" label="Синий" value="0 %" /></IconField>
              <IconField><Icon name="gamma" /><Spin id="gamma" label="Гамма" value="1,00" /></IconField>
            </Fields>
            <SectionHead>
              <Collapse aria-label="Свернуть" />
              <SectionName>Положение и размер...</SectionName>
              <SmallButton aria-label="Дополнительно"><Icon name="more" size={12} /></SmallButton>
            </SectionHead>
            <Fields>
              <Label htmlFor="width">Ширина:</Label>
              <Label htmlFor="height">Высота:</Label>
              <Spin id="width" value={'4,04 "'} />
              <Spin id="height" value={'2,88 "'} />
              <CheckRow>
                <Checkbox type="checkbox" />
                Сохранять пропорции
              </CheckRow>
            </Fields>
            <SectionHead>
              <Collapse aria-label="Свернуть" />
              <SectionName>Обтекание</SectionName>
              <SmallButton aria-label="Дополнительно"><Icon name="more" size={12} /></SmallButton>
            </SectionHead>
            <WrapRow>
              {["wrapOff", "wrapLeft", "wrapRight", "wrapOn", "wrapThrough", "wrapContour"].map((name) => (
                <ToolButton key={name} aria-label={name}><Icon name={name} /></ToolButton>
              ))}
            </WrapRow>
          </Deck>
          <Tabs>
            <TabMenu aria-label="Настройка"><Icon name="panelMenu" size={14} /></TabMenu>
            <Tab $on aria-label="Свойства"><Icon name="cubes" size={23} /></Tab>
            <Tab aria-label="Стили"><Icon name="party" size={23} /></Tab>
            <Tab aria-label="Галерея"><Icon name="photos" size={23} /></Tab>
            <Tab aria-label="Навигатор"><Icon name="navigator" size={23} /></Tab>
          </Tabs>
        </Sidebar>
        <Floating>
          <FloatingTitle>
            <FloatingName>Изображение</FloatingName>
            <FloatingMenu aria-label="▾" />
            <SmallButton aria-label="Закрыть"><Icon name="bigCross" size={14} /></SmallButton>
          </FloatingTitle>
          <FloatingRow>
            <Tools items={["shapes", "|", "wand", "v-"]} />
            <Gap />
            <Field $w={100} $h={23} $dark>
              <Select $pad={2} aria-label="Графический режим">
                <option>По умолчанию</option>
              </Select>
              <Chevron />
            </Field>
            <Gap />
            <Tools items={["spectrum"]} />
            <Gap />
            <ToolButton $narrow aria-label="Прозрачность"><Icon name="glass" /></ToolButton>
            <Spin id="float-transparency" label="Прозрачность" value="" width={56} height={21} disabled />
            <Gap />
            <Tools items={["flipV", "flipH", "|", "properties"]} />
          </FloatingRow>
        </Floating>
        <PageTip>Страница  1 / 3</PageTip>
      </Main>

      <StatusBar>
        <Cell $w={391} $pad={10}>Страница  2 / 3</Cell>
        <Cell $w={360} $pad={5}>Обычный</Cell>
        <Cell />
        <Cell $w={34} $center>ВСТ</Cell>
        <Cell $w={44} $center>СТАНД</Cell>
        <Cell $w={16} $center>*</Cell>
        <Cell $w={28} />
        <Cell $w={434} $pad={6}>
          <Half><Icon name="posIcon" />  0,00 / 0,00</Half>
          <Half><Icon name="sizeIcon" /> 4,04 x 2,88</Half>
        </Cell>
        <Cell $w={75} $pad={2}>
          <PageModes>
            <Icon name="onePage" />
            <Icon name="twoPages" size={20} />
            <Icon name="book" size={18} />
          </PageModes>
        </Cell>
        <Cell $w={143} $pad={4}>
          <ZoomButton aria-label="Уменьшить" />
          <ZoomSlider type="range" min="0" max="100" defaultValue="50" aria-label="Масштаб" />
          <ZoomButton $plus aria-label="Увеличить" />
        </Cell>
        <Cell $w={46} $pad={5}>100 %</Cell>
      </StatusBar>
      <TaskBar>
        <TaskButton aria-label="Пуск"><Icon name="start" size={18} /></TaskButton>
        <TaskButton aria-label="Поиск"><Icon name="search" size={17} /></TaskButton>
        <TaskButton aria-label="Представление задач"><Icon name="taskView" size={17} /></TaskButton>
        <TaskButton $state="running" aria-label="Яндекс"><Icon name="yandex" size={23} /></TaskButton>
        <TaskButton aria-label="Яндекс Браузер"><YaTile>Я</YaTile></TaskButton>
        <TaskButton aria-label="Edge"><Icon name="edge" size={22} /></TaskButton>
        <TaskButton aria-label="Проводник"><Icon name="folder" size={21} /></TaskButton>
        <TaskButton aria-label="Почта"><Icon name="mailApp" size={24} /></TaskButton>
        <TaskButton $state="active" aria-label="OpenOffice Writer"><Icon name="writer" size={23} /></TaskButton>
        <Tray>
          <TrayButton $w={46} aria-label="Люди"><Icon name="people" /></TrayButton>
          <TrayButton $w={25} aria-label="Скрытые значки"><Icon name="chevronUp" size={14} /></TrayButton>
          <TrayButton $w={24} aria-label="Громкость"><Icon name="speaker" size={17} /></TrayButton>
          <TrayButton $w={24} aria-label="Сеть"><Icon name="wifi" size={14} /></TrayButton>
          <TrayButton $w={34} aria-label="Язык">ENG</TrayButton>
          <Clock>8:53<br />01.05.2020</Clock>
          <TrayButton $w={32} aria-label="Уведомления"><Icon name="notes" size={17} /></TrayButton>
          <ShowDesktop aria-label="Показать рабочий стол" />
        </Tray>
      </TaskBar>
    </Window>
  );
}
